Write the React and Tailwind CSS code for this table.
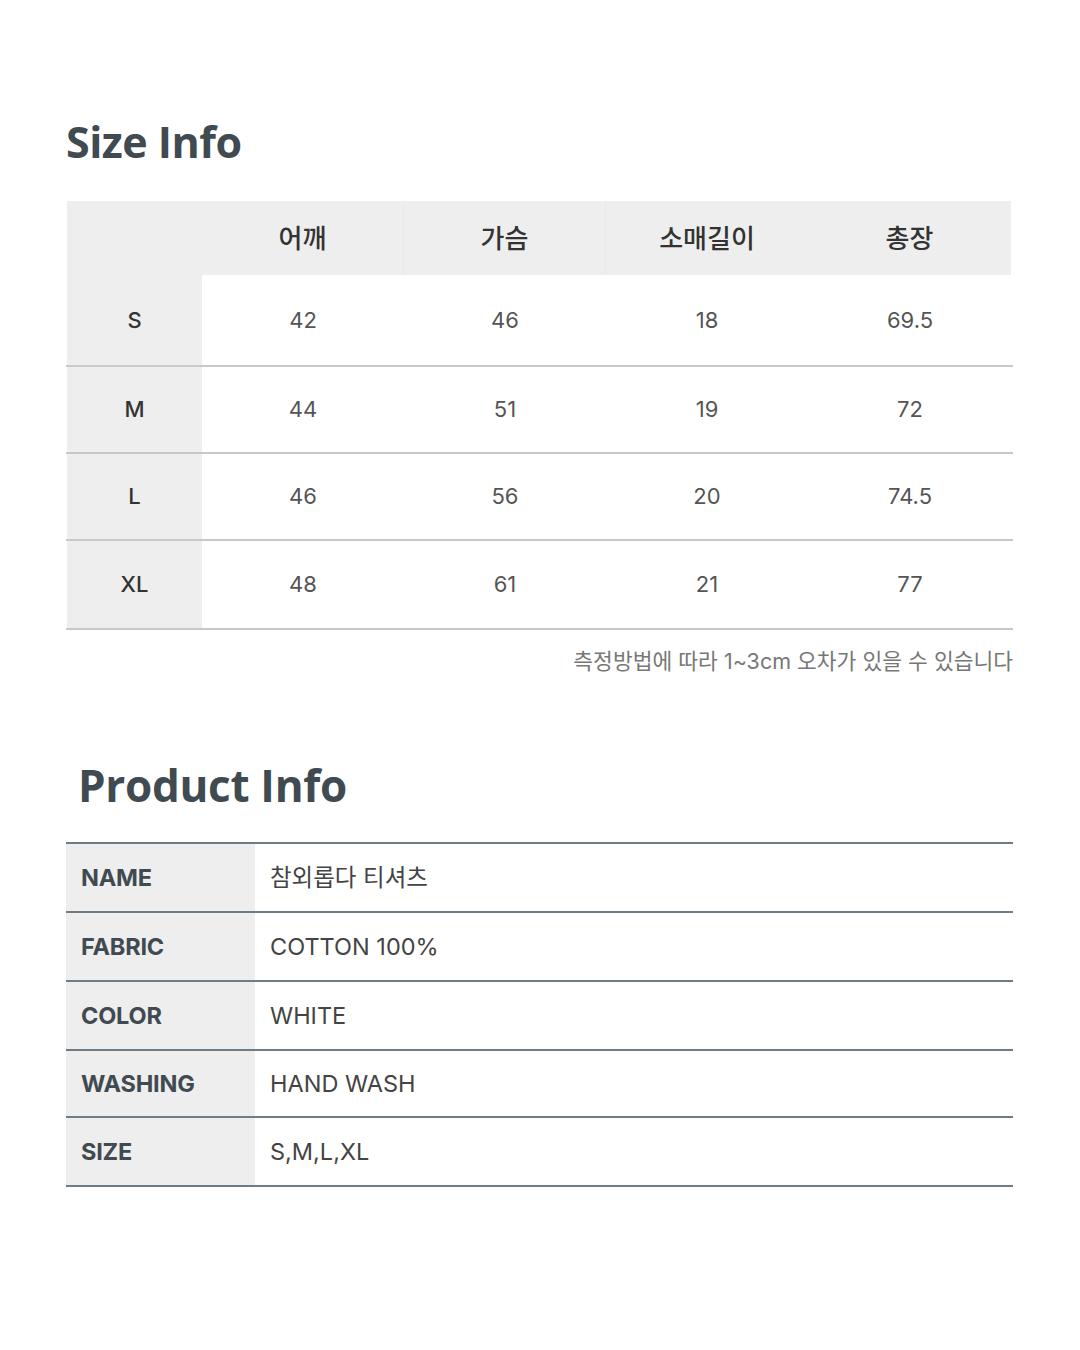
const sizes = [
  { label: 'S', vals: ['42', '46', '18', '69.5'], h: 'h-[90px]' },
  { label: 'M', vals: ['44', '51', '19', '72'], h: 'h-[85px]' },
  { label: 'L', vals: ['46', '56', '20', '74.5'], h: 'h-[85px]' },
  { label: 'XL', vals: ['48', '61', '21', '77'], h: 'h-[87px]' },
];

const heads = ['어깨', '가슴', '소매길이', '총장'];

const info = [
  ['NAME', '참외롭다 티셔츠'],
  ['FABRIC', 'COTTON 100%'],
  ['COLOR', 'WHITE'],
  ['WASHING', 'HAND WASH'],
  ['SIZE', 'S,M,L,XL'],
];

const body = { fontFamily: 'Inter, "Noto Sans CJK KR", sans-serif' };
const title = { fontFamily: '"Open Sans", "Noto Sans", sans-serif' };

export default function App() {
  return (
    <div className="w-[1080px] h-[1350px] bg-white pt-[112px] pl-[66px] pr-[67px]" style={body}>
      {/* Size Info */}
      <h2 className="text-[43px] font-bold leading-[60px] text-[#3f4a51] tracking-[-0.5px]" style={title}>
        Size Info
      </h2>

      <div className="mt-[29px]">
        <div className="ml-px mr-[2px] grid grid-cols-[135px_202px_202px_202px_203px] h-[74px] bg-[#eeeeee]">
          <div />
          {heads.map((h, i) => (
            <div
              key={h}
              className={`flex items-center justify-center text-[26px] font-medium text-[#333] ${i < 2 ? 'border-r border-[#e9e9e9]' : ''}`}
            >
              {h}
            </div>
          ))}
        </div>
        {sizes.map((r) => (
          <div key={r.label} className="border-b-2 border-[#c8c8c8]">
            <div className={`grid grid-cols-[136px_202px_202px_202px_204px] ${r.h}`}>
              <div className="ml-px bg-[#eeeeee] flex items-center justify-center text-[22px] font-medium text-[#333]">
                {r.label}
              </div>
              {r.vals.map((v, i) => (
                <div key={i} className="flex items-center justify-center text-[22px] text-[#555]">
                  {v}
                </div>
              ))}
            </div>
          </div>
        ))}
        <p className="mt-[17px] text-right text-[21.5px] text-[#777] leading-[28px]">
          측정방법에 따라 1~3cm 오차가 있을 수 있습니다
        </p>
      </div>

      {/* Product Info */}
      <h2 className="mt-[80px] ml-[12px] text-[44px] font-bold leading-[60px] text-[#3f4a51] tracking-[-0.3px]" style={title}>
        Product Info
      </h2>

      <div className="mt-[27px] border-t-2 border-[#6f7c86]">
        {info.map(([k, v], i) => (
          <div key={k} className={`flex ${i === 3 ? 'h-[67px]' : 'h-[69px]'} border-b-2 border-[#6f7c86]`}>
            <div className="w-[189px] bg-[#eeeeee] flex items-center pl-[15px] text-[23.5px] font-bold text-[#3f4a51] tracking-[-0.2px]">
              {k}
            </div>
            <div className="flex-1 flex items-center pl-[15px] text-[23.5px] text-[#444]">{v}</div>
          </div>
        ))}
      </div>
    </div>
  );
}
